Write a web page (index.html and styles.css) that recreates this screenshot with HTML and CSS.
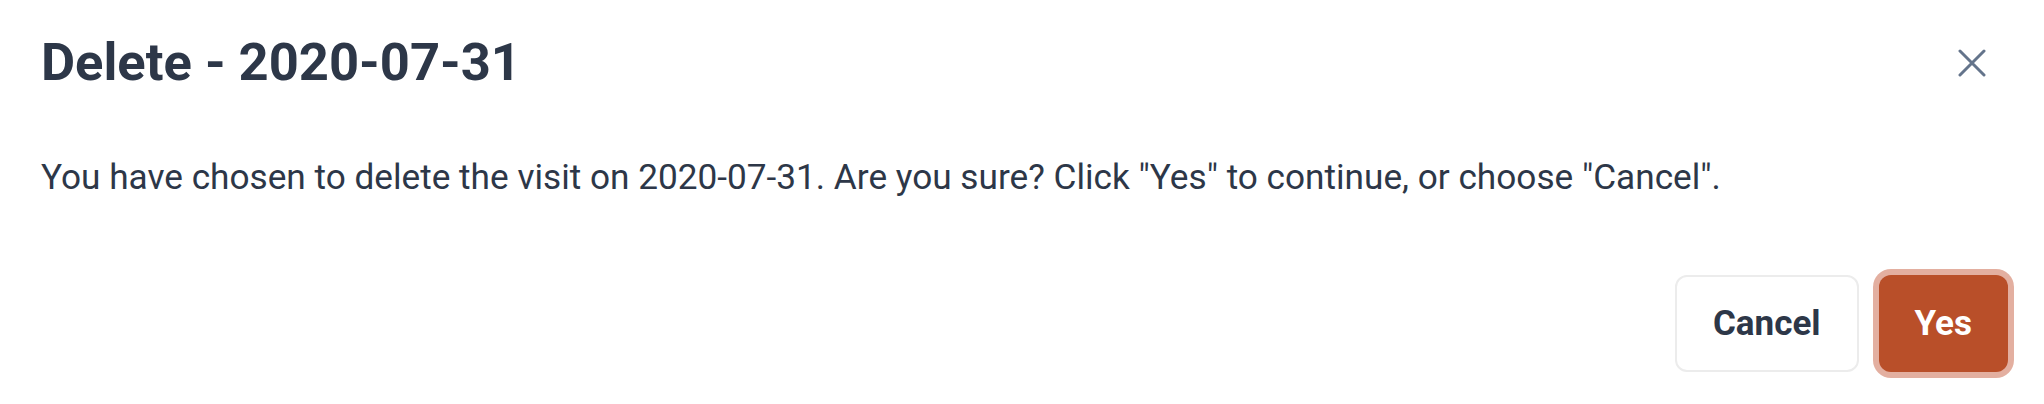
FILE: index.html
```html
<!DOCTYPE html>
<html lang="en">
<head>
<meta charset="utf-8">
<title>Delete - 2020-07-31</title>
<link rel="stylesheet" href="styles.css">
</head>
<body>
<div class="modal">
  <div class="modal-header">
    <h1 class="modal-title">Delete - 2020-07-31</h1>
    <button class="close-btn" aria-label="Close">
      <svg width="28" height="28" viewBox="0 0 28 28" fill="none" stroke="currentColor" stroke-width="3" stroke-linecap="round">
        <path d="M2 2 L26 26 M26 2 L2 26"/>
      </svg>
    </button>
  </div>
  <p class="modal-body">You have chosen to delete the visit on 2020-07-31. Are you sure? Click "Yes" to continue, or choose "Cancel".</p>
  <div class="modal-footer">
    <button class="btn btn-cancel">Cancel</button>
    <button class="btn btn-yes">Yes</button>
  </div>
</div>
</body>
</html>
```

FILE: styles.css
```css
html, body {
  margin: 0;
  padding: 0;
  background: #ffffff;
}

body {
  font-family: Roboto, "Liberation Sans", Arial, sans-serif;
  color: #2d3748;
}

.modal {
  width: 2044px;
  height: 404px;
  box-sizing: border-box;
  padding: 30px 36px 0 41px;
  display: flex;
  flex-direction: column;
}

.modal-header {
  display: flex;
  align-items: center;
  justify-content: space-between;
}

.modal-title {
  margin: 0;
  font-size: 52.5px;
  line-height: 65px;
  font-weight: 700;
  color: #2d3748;
}

.close-btn {
  border: 0;
  background: transparent;
  padding: 0;
  margin-right: 22px;
  width: 28px;
  height: 28px;
  color: #64748b;
  display: flex;
}

.modal-body {
  margin: 58px 0 0 0;
  font-size: 35.2px;
  line-height: 48px;
  font-weight: 400;
  color: #2d3748;
}

.modal-footer {
  display: flex;
  justify-content: flex-end;
  gap: 20px;
  margin-top: 74px;
}

.btn {
  font-family: Roboto, "Liberation Sans", Arial, sans-serif;
  font-size: 35px;
  font-weight: 700;
  height: 97px;
  padding: 0 36px;
  border-radius: 12px;
  cursor: pointer;
}

.btn-cancel {
  background: #ffffff;
  color: #2d3748;
  border: 2px solid #ececec;
}

.btn-yes {
  background: #b94f29;
  color: #ffffff;
  border: 0;
  box-shadow: 0 0 0 6px #e3afa0;
}
```
